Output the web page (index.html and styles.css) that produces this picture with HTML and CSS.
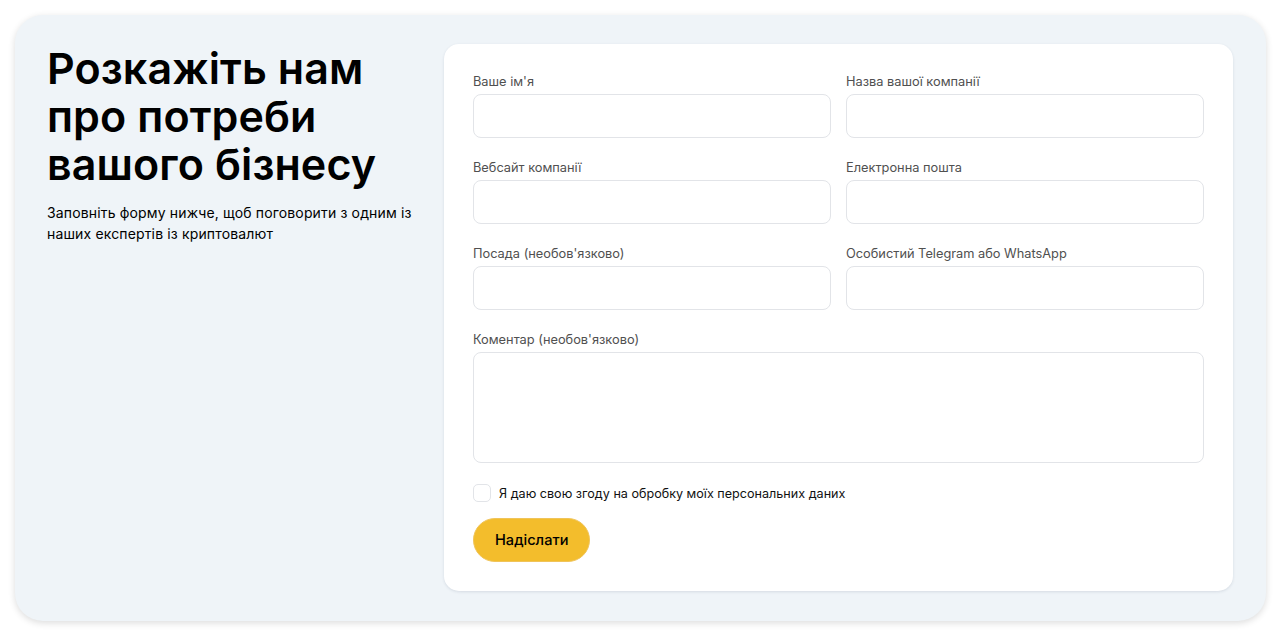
FILE: index.html
```html
<!DOCTYPE html>
<html>
<head>
  <title>Розкажіть нам про потреби вашого бізнесу</title>
  <link rel="stylesheet" href="styles.css">
</head>
<body>
  <section class="panel">
    <div class="intro">
      <h1>Розкажіть нам про потреби вашого бізнесу</h1>
      <p>Заповніть форму нижче, щоб поговорити з одним із наших експертів із криптовалют</p>
    </div>

    <form class="card">
      <div class="grid">
        <label class="field">
          <span>Ваше ім'я</span>
          <input type="text">
        </label>
        <label class="field">
          <span>Назва вашої компанії</span>
          <input type="text">
        </label>
        <label class="field">
          <span>Вебсайт компанії</span>
          <input type="text">
        </label>
        <label class="field">
          <span>Електронна пошта</span>
          <input type="text">
        </label>
        <label class="field">
          <span>Посада (необов'язково)</span>
          <input type="text">
        </label>
        <label class="field">
          <span>Особистий Telegram або WhatsApp</span>
          <input type="text">
        </label>
        <label class="field wide">
          <span>Коментар (необов'язково)</span>
          <textarea></textarea>
        </label>
      </div>

      <label class="consent">
        <input type="checkbox">
        <span>Я даю свою згоду на обробку моїх персональних даних</span>
      </label>

      <button type="button" class="submit">Надіслати</button>
    </form>
  </section>
</body>
</html>
```

FILE: styles.css
```css
body {
  margin: 0;
  padding: 15px 16px 15px 15px;
  background-color: #ffffff;
  font-family: Inter, "Noto Sans", sans-serif;
  color: #000000;
}

.panel {
  display: flex;
  gap: 23px;
  align-items: flex-start;
  background-color: #eff4f8;
  border-radius: 28px;
  padding: 29px 33px 30px 32px;
  box-shadow: 0 2px 7px rgba(0, 0, 0, 0.14);
}

.intro {
  width: 374px;
  flex-shrink: 0;
}

h1 {
  margin: 0 0 14px 0;
  font-size: 43px;
  line-height: 48px;
  font-weight: 600;
  letter-spacing: 0.1px;
}

.intro p {
  margin: 0;
  font-size: 14px;
  line-height: 21px;
  letter-spacing: 0.15px;
}

.card {
  flex: 1;
  background-color: #ffffff;
  border-radius: 15px;
  padding: 30px 29px 29px 29px;
  box-shadow: 0 1px 3px rgba(30, 50, 80, 0.12);
}

.grid {
  display: grid;
  grid-template-columns: 1fr 1fr;
  column-gap: 15px;
  row-gap: 22px;
}

.field {
  display: flex;
  flex-direction: column;
  gap: 4px;
}

.field span {
  font-size: 12.8px;
  line-height: 16px;
  color: #505050;
}

.field input,
.field textarea {
  box-sizing: border-box;
  height: 44px;
  border: 1px solid #e2e4e8;
  border-radius: 8px;
  background: #ffffff;
  font-family: inherit;
  margin: 0;
}

.field textarea {
  height: 111px;
  resize: none;
}

.wide {
  grid-column: 1 / 3;
}

.consent {
  display: flex;
  align-items: center;
  gap: 8px;
  margin-top: 21px;
  font-size: 12.6px;
  color: #111111;
}

.consent input {
  appearance: none;
  width: 18px;
  height: 18px;
  margin: 0;
  border: 1px solid #e2e4e8;
  border-radius: 5px;
  background: #ffffff;
}

.submit {
  display: block;
  margin-top: 16px;
  height: 44px;
  padding: 0 21px;
  border: 1px solid #f0c45a;
  border-radius: 22px;
  background-color: #f3bd2c;
  font-family: inherit;
  font-size: 14.6px;
  font-weight: 500;
  color: #000000;
}
```
